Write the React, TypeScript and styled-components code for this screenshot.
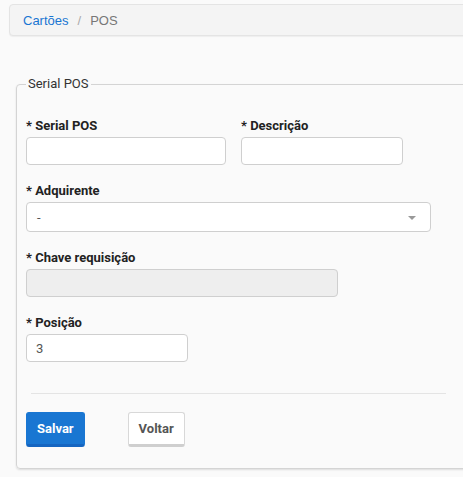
import styled, { createGlobalStyle } from "styled-components"

const GlobalStyle = createGlobalStyle`
    body {
        margin: 0;
        background-color: #fafafa;
        font-family: Roboto, "Liberation Sans", sans-serif;
        overflow: hidden;
    }
`

const Page = styled.div`
    width: 463px;
    height: 477px;
    overflow: hidden;
`
const Breadcrumb = styled.nav`
    margin: 4px 0 0 9px;
    width: 480px;
    height: 32px;
    box-sizing: border-box;
    display: flex;
    align-items: center;
    gap: 9px;
    padding: 0 13px;
    background-color: #f4f4f4;
    border: 1px solid #e4e4e4;
    border-radius: 4px;
    box-shadow: 0 1px 1px rgba(0, 0, 0, 0.05);
    font-family: "Liberation Sans", Arial, sans-serif;
    font-size: 13px;
    color: #777;
`
const Crumb = styled.a`
    color: #1976d2;
    text-decoration: none;
`
const Sep = styled.span`
    color: #aaa;
`
const Fieldset = styled.fieldset`
    margin: 40px 0 0 16px;
    width: 480px;
    box-sizing: border-box;
    padding: 26px 9px 21px;
    border: 1px solid #d4d4d4;
    border-radius: 4px;
    box-shadow: 0 1px 2px rgba(0, 0, 0, 0.12);
`
const Legend = styled.legend`
    padding: 0 2px;
    font-size: 13px;
    line-height: 16px;
    color: #333;
`
const Row = styled.div`
    display: flex;
    gap: 15px;
`
const Group = styled.div<{ mb?: number }>`
    display: flex;
    flex-direction: column;
    margin-bottom: ${props => props.mb ?? 18}px;
`
const Label = styled.label`
    font-size: 13px;
    line-height: 16px;
    font-weight: bold;
    color: #222;
    margin-bottom: 3px;
`
const Input = styled.input<{ w: number }>`
    width: ${props => props.w}px;
    height: 28px;
    box-sizing: border-box;
    padding: 0 9px;
    border: 1px solid #cfcfcf;
    border-radius: 4px;
    background-color: #fff;
    font-family: Roboto, sans-serif;
    font-size: 13px;
    color: #555;
    &:disabled {
        background-color: #eeeeee;
    }
`
const SelectBox = styled.div`
    width: 405px;
    height: 30px;
    box-sizing: border-box;
    display: flex;
    align-items: center;
    justify-content: space-between;
    padding: 0 14px 0 10px;
    border: 1px solid #cfcfcf;
    border-radius: 4px;
    background-color: #fff;
    font-size: 13px;
    color: #555;
`
const Caret = styled.span`
    width: 0;
    height: 0;
    border-left: 4px solid transparent;
    border-right: 4px solid transparent;
    border-top: 4px solid #999;
    margin-top: 2px;
`
const Divider = styled.hr`
    margin: 31px 0 18px 5px;
    width: 415px;
    border: 0;
    border-top: 1px solid #e4e4e4;
`
const Actions = styled.div`
    display: flex;
    gap: 43px;
`
const Button = styled.button<{ primary?: boolean }>`
    height: 35px;
    padding: 0 10px;
    box-sizing: border-box;
    border-radius: 3px;
    font-family: Roboto, sans-serif;
    font-size: 13px;
    font-weight: bold;
    cursor: pointer;
    background-color: ${props => props.primary ? "#1976d2" : "#fff"};
    color: ${props => props.primary ? "#fff" : "#555"};
    border: 1px solid ${props => props.primary ? "#1976d2" : "#d8d8d8"};
    border-bottom: 3px solid ${props => props.primary ? "#1565c0" : "#cfcfcf"};
`

export default function App() {
    return (
        <Page>
            <GlobalStyle />
            <Breadcrumb>
                <Crumb href="#">Cartões</Crumb>
                <Sep>/</Sep>
                <span>POS</span>
            </Breadcrumb>
            <Fieldset>
                <Legend>Serial POS</Legend>
                <Row>
                    <Group>
                        <Label>* Serial POS</Label>
                        <Input w={200} />
                    </Group>
                    <Group>
                        <Label>* Descrição</Label>
                        <Input w={162} />
                    </Group>
                </Row>
                <Group>
                    <Label>* Adquirente</Label>
                    <SelectBox>
                        <span>-</span>
                        <Caret />
                    </SelectBox>
                </Group>
                <Group>
                    <Label>* Chave requisição</Label>
                    <Input w={312} disabled />
                </Group>
                <Group mb={0}>
                    <Label>* Posição</Label>
                    <Input w={162} defaultValue="3" />
                </Group>
                <Divider />
                <Actions>
                    <Button primary>Salvar</Button>
                    <Button>Voltar</Button>
                </Actions>
            </Fieldset>
        </Page>
    )
}
